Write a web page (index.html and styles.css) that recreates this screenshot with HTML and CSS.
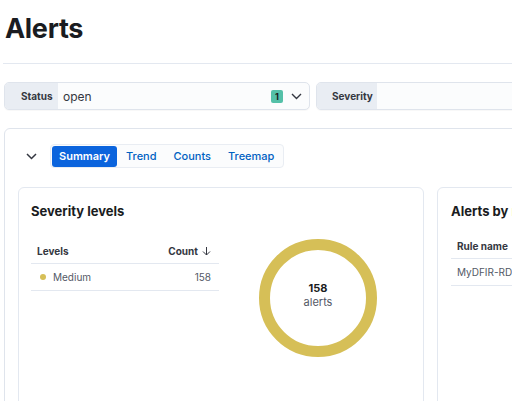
FILE: index.html
```html
<!DOCTYPE html>
<html>
<head>
<meta charset="utf-8">
<link rel="stylesheet" href="styles.css">
</head>
<body>
<div class="page">
  <h1 class="title">Alerts</h1>
  <div class="rule"></div>
  <div class="filters">
    <div class="filter status">
      <span class="flabel">Status</span>
      <span class="fvalue">open</span>
      <span class="badge">1</span>
      <svg class="chev" width="11" height="7" viewBox="0 0 11 7"><path d="M1 1l4.5 4.5L10 1" fill="none" stroke="#343741" stroke-width="1.4"/></svg>
    </div>
    <div class="filter severity">
      <span class="flabel sev">Severity</span>
      <span class="fvalue"></span>
    </div>
  </div>
  <div class="panel">
    <div class="toolbar">
      <svg class="collapse" width="11" height="7" viewBox="0 0 11 7"><path d="M1 1l4.5 4.5L10 1" fill="none" stroke="#343741" stroke-width="1.5"/></svg>
      <div class="tabs">
        <span class="tab active">Summary</span>
        <span class="tab">Trend</span>
        <span class="tab">Counts</span>
        <span class="tab">Treemap</span>
      </div>
    </div>
    <div class="cards">
      <div class="card sev-card">
        <div class="ctitle">Severity levels</div>
        <div class="sev-body">
          <div class="table">
            <div class="thead">
              <span>Levels</span>
              <span class="countcol">Count <svg width="9" height="10" viewBox="0 0 9 10"><path d="M4.5 1v8M1 5.5l3.5 3.5L8 5.5" fill="none" stroke="#343741" stroke-width="1"/></svg></span>
            </div>
            <div class="trow">
              <span class="lvl"><i class="dot"></i>Medium</span>
              <span>158</span>
            </div>
          </div>
          <div class="donut-wrap">
            <div class="donut">
              <div class="dnum">158</div>
              <div class="dlabel">alerts</div>
            </div>
          </div>
        </div>
      </div>
      <div class="card rule-card">
        <div class="ctitle">Alerts by rule</div>
        <div class="rtable">
          <div class="rhead">Rule name</div>
          <div class="rrow">MyDFIR-RDP-Brute-Force</div>
        </div>
      </div>
    </div>
  </div>
</div>
</body>
</html>
```

FILE: styles.css
```css
* { box-sizing: border-box; }
html, body { margin: 0; padding: 0; background: #fff; }
body {
  font-family: Inter, "Noto Sans", sans-serif;
  color: #1a1c21;
  width: 512px;
  height: 401px;
  overflow: hidden;
}
.page { padding: 0 0 0 4px; width: 600px; }
.title {
  margin: 0;
  padding-top: 12px;
  padding-left: 1px;
  font-size: 27px;
  line-height: 34px;
  font-weight: 700;
  letter-spacing: -0.3px;
  color: #1a1c21;
}
.rule {
  margin-top: 17px;
  margin-left: -1px;
  height: 1px;
  background: #e3e8f0;
}
.filters {
  margin-top: 18px;
  display: flex;
  gap: 6px;
}
.filter {
  flex-shrink: 0;
  height: 28px;
  border: 1px solid #dfe4ec;
  border-radius: 5px;
  display: flex;
  align-items: center;
  background: #fbfcfd;
  overflow: hidden;
  box-shadow: 0 1px 1px rgba(0,0,0,0.03);
}
.status { width: 306px; }
.severity { width: 260px; }
.flabel {
  height: 100%;
  display: flex;
  align-items: center;
  background: #e9edf3;
  font-size: 10px;
  font-weight: 700;
  color: #343741;
  padding: 0 0 0 16px;
  width: 53px;
}
.flabel.sev { width: 60px; padding-left: 15px; }
.fvalue {
  flex: 1;
  font-size: 12px;
  color: #343741;
  padding-left: 5px;
}
.badge {
  width: 12px;
  height: 13px;
  border-radius: 2px;
  background: #54c0a8;
  color: #1a1c21;
  font-size: 9px;
  font-weight: 700;
  display: flex;
  align-items: center;
  justify-content: center;
  margin-right: 8px;
}
.chev { margin-right: 7px; }
.panel {
  margin-top: 18px;
  border: 1px solid #dfe4ec;
  border-radius: 6px;
  height: 320px;
  padding: 15px 0 0 13px;
}
.toolbar {
  display: flex;
  align-items: center;
}
.collapse { margin: 0 0 0 8px; }
.tabs {
  margin-left: 13px;
  display: flex;
  align-items: center;
  height: 24px;
  padding: 1px;
  border: 1px solid #e9edf3;
  border-radius: 4px;
  background: #fbfcfd;
}
.tab {
  font-size: 11px;
  font-weight: 500;
  color: #0061c2;
  padding: 0 8px;
  height: 21px;
  display: flex;
  align-items: center;
}
.tab + .tab { margin-left: 1px; }
.tab.active {
  background: #0b64dd;
  color: #fff;
  font-weight: 600;
  border-radius: 3px;
  padding: 0 7px;
}
.cards {
  margin-top: 19px;
  display: flex;
  gap: 13px;
}
.card {
  flex-shrink: 0;
  border: 1px solid #e3e8f0;
  border-radius: 6px;
  height: 260px;
  padding: 15px 0 0 12px;
}
.sev-card { width: 406px; }
.rule-card { width: 140px; padding-left: 13px; }
.ctitle {
  font-size: 13px;
  font-weight: 700;
  line-height: 17px;
  color: #1a1c21;
  white-space: nowrap;
}
.sev-body {
  display: flex;
}
.table {
  width: 188px;
  flex-shrink: 0;
  margin-top: 19px;
  font-size: 10px;
}
.thead {
  display: flex;
  justify-content: space-between;
  font-weight: 700;
  color: #343741;
  padding: 0 8px 0 6px;
  height: 25px;
  align-items: center;
  border-bottom: 1px solid #e3e8f0;
}
.countcol { display: flex; align-items: center; gap: 4px; }
.trow {
  display: flex;
  justify-content: space-between;
  color: #535966;
  padding: 0 8px 0 9px;
  height: 27px;
  align-items: center;
  border-bottom: 1px solid #e3e8f0;
}
.lvl { display: flex; align-items: center; }
.dot {
  width: 6px; height: 6px; border-radius: 50%;
  background: #d6bf57;
  margin-right: 7px;
}
.donut-wrap {
  margin-left: 40px;
  margin-top: 19px;
}
.donut {
  width: 118px;
  height: 118px;
  border-radius: 50%;
  border: 11px solid #d6bf57;
  display: flex;
  flex-direction: column;
  align-items: center;
  justify-content: center;
  padding-bottom: 7px;
}
.dnum { font-size: 11px; font-weight: 700; color: #1a1c21; line-height: 14px; }
.dlabel { font-size: 11px; color: #535966; line-height: 14px; }
.rtable { margin-top: 13px; font-size: 10px; width: 140px; }
.rhead {
  font-weight: 700;
  color: #343741;
  height: 26px;
  display: flex;
  align-items: center;
  padding-left: 6px;
  border-bottom: 1px solid #e3e8f0;
}
.rrow {
  color: #535966;
  height: 27px;
  display: flex;
  align-items: center;
  padding-left: 6px;
  border-bottom: 1px solid #e3e8f0;
  white-space: nowrap;
}
```
